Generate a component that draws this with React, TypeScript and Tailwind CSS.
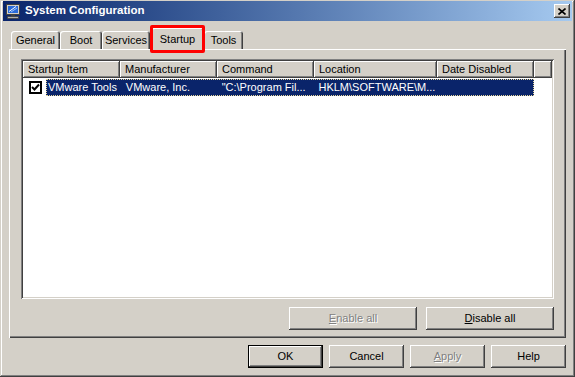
import React from "react";

const raised =
  "shadow-[inset_-1px_-1px_0_#404040,inset_1px_1px_0_#ffffff,inset_-2px_-2px_0_#808080,inset_2px_2px_0_#d4d0c8]";

type BtnProps = {
  children: React.ReactNode;
  width: string;
  disabled?: boolean;
  isDefault?: boolean;
};

const Button = ({ children, width, disabled, isDefault }: BtnProps) => {
  const frame = isDefault
    ? "shadow-[inset_0_0_0_1px_#000000,inset_-2px_-2px_0_#404040,inset_2px_2px_0_#ffffff,inset_-3px_-3px_0_#808080]"
    : raised;
  return (
    <div
      className={`${width} h-[23px] flex items-center justify-center bg-[#d4d0c8] ${frame} ${
        disabled ? "text-[#808080] [text-shadow:1px_1px_0_#ffffff]" : "text-black"
      }`}
    >
      {children}
    </div>
  );
};

const MonitorIcon = () => (
  <svg width="16" height="16" viewBox="0 0 16 16" className="shrink-0">
    <rect x="1.5" y="1.5" width="13" height="10" fill="#d4d0c8" stroke="#404040" strokeWidth="1" />
    <rect x="3" y="3" width="10" height="7" fill="#2a6ad8" />
    <path d="M4 8.5 L11 3.5" stroke="#ffffff" strokeWidth="1" />
    <path d="M6 9 L12 5" stroke="#9cc4ff" strokeWidth="1" />
    <rect x="6" y="12" width="4" height="1" fill="#404040" />
    <rect x="2.5" y="13.5" width="11" height="2" fill="#b0b0b0" stroke="#404040" strokeWidth="0.8" />
  </svg>
);

const Tab = ({ label, width }: { label: string; width: string }) => (
  <div
    className={`${width} h-[18px] flex items-center justify-center rounded-t-[3px] bg-[#d4d0c8] shadow-[inset_1px_1px_0_#ffffff,inset_-1px_0_0_#404040,inset_-2px_0_0_#808080]`}
  >
    {label}
  </div>
);

const HeaderCell = ({ label, width }: { label: string; width: string }) => (
  <div
    className={`${width} h-[17px] shrink-0 flex items-center pl-[5px] bg-[#d4d0c8] shadow-[inset_-1px_-1px_0_#404040,inset_1px_1px_0_#ffffff,inset_-2px_-2px_0_#808080]`}
  >
    {label}
  </div>
);

export default function App() {
  return (
    <div
      className="w-[575px] h-[377px] bg-[#d4d0c8] pt-[1px] px-[3px] flex flex-col text-[11px] text-black shadow-[inset_-1px_-1px_0_#404040,inset_1px_1px_0_#d4d0c8,inset_-2px_-2px_0_#808080,inset_2px_2px_0_#ffffff]"
      style={{ fontFamily: '"Liberation Sans", Arial, sans-serif' }}
    >
      {/* Title bar */}
      <div className="h-[20px] flex items-center pl-[2px] pr-[2px] bg-gradient-to-r from-[#0a246a] to-[#a6caf0]">
        <MonitorIcon />
        <span className="ml-[4px] font-bold text-white text-[11.5px] leading-none">
          System Configuration
        </span>
        <div className="ml-auto w-[16px] h-[14px] flex items-center justify-center bg-[#d4d0c8] shadow-[inset_-1px_-1px_0_#404040,inset_1px_1px_0_#ffffff,inset_-2px_-2px_0_#808080]">
          <svg width="8" height="7" viewBox="0 0 8 7">
            <path d="M0.5 0.5 L7.5 6.5 M7.5 0.5 L0.5 6.5" stroke="#000" strokeWidth="1.6" />
          </svg>
        </div>
      </div>

      {/* Tabs */}
      <div className="mt-[7px] ml-[8px] h-[21px] flex items-end">
        <Tab label="General" width="w-[49px]" />
        <Tab label="Boot" width="w-[42px]" />
        <Tab label="Services" width="w-[48px]" />
        <div className="relative z-10 w-[53px] h-[22px] -mb-[1px] ml-[1px] flex items-start justify-center pt-[3px] rounded-t-[3px] bg-[#d4d0c8] shadow-[inset_1px_1px_0_#ffffff,inset_-1px_0_0_#404040,inset_-2px_0_0_#808080]">
          Startup
          <div className="absolute -left-[1px] -right-[1px] -top-[3px] -bottom-[3px] border-[3px] border-[#ff0000] rounded-[2px]" />
        </div>
        <Tab label="Tools" width="w-[39px]" />
      </div>

      {/* Panel */}
      <div className="ml-[6px] w-[557px] h-[289px] flex flex-col pt-[10px] px-[12px] bg-[#d4d0c8] shadow-[inset_1px_1px_0_#ffffff,inset_-1px_-1px_0_#404040,inset_-2px_-2px_0_#808080]">
        <div className="w-[533px] h-[240px] bg-white p-[2px] shadow-[inset_1px_1px_0_#808080,inset_-1px_-1px_0_#ffffff,inset_2px_2px_0_#404040,inset_-2px_-2px_0_#d4d0c8]">
          <div className="flex">
            <HeaderCell label="Startup Item" width="w-[97px]" />
            <HeaderCell label="Manufacturer" width="w-[97px]" />
            <HeaderCell label="Command" width="w-[97px]" />
            <HeaderCell label="Location" width="w-[123px]" />
            <HeaderCell label="Date Disabled" width="w-[97px]" />
            <div className="flex-1 h-[17px] bg-[#d4d0c8] shadow-[inset_-1px_-1px_0_#404040,inset_1px_1px_0_#ffffff,inset_-2px_-2px_0_#808080]" />
          </div>
          <div className="flex h-[17px] mt-[1px] items-center">
            <div className="w-[23px] pl-[6px] flex items-center">
              <div className="w-[13px] h-[13px] bg-white border-2 border-black flex items-center justify-center">
                <svg width="9" height="9" viewBox="0 0 9 9">
                  <path d="M1 4 L3.5 6.5 L8 1.5" stroke="#000" strokeWidth="2" fill="none" />
                </svg>
              </div>
            </div>
            <div className="w-[488px] h-[17px] flex items-center bg-[#0a246a] text-white border border-dotted border-[#e8d89a] whitespace-nowrap">
              <div className="w-[73px] pl-[1px] overflow-hidden">VMware Tools</div>
              <div className="w-[97px] pl-[6px] overflow-hidden">VMware, Inc.</div>
              <div className="w-[97px] pl-[5px] overflow-hidden">"C:\Program Fil...</div>
              <div className="w-[123px] pl-[5px] overflow-hidden">HKLM\SOFTWARE\M...</div>
              <div className="w-[97px]" />
            </div>
          </div>
        </div>
        <div className="mt-[8px] flex justify-end gap-[9px]">
          <Button width="w-[128px]" disabled>
            <span>
              <span className="underline">E</span>nable all
            </span>
          </Button>
          <Button width="w-[128px]">
            <span>
              <span className="underline">D</span>isable all
            </span>
          </Button>
        </div>
      </div>

      {/* Dialog buttons */}
      <div className="mt-[7px] flex justify-end gap-[6px] pr-[6px]">
        <Button width="w-[75px]" isDefault>
          OK
        </Button>
        <Button width="w-[75px]">Cancel</Button>
        <Button width="w-[75px]" disabled>
          <span>
            <span className="underline">A</span>pply
          </span>
        </Button>
        <Button width="w-[75px]">Help</Button>
      </div>
    </div>
  );
}
